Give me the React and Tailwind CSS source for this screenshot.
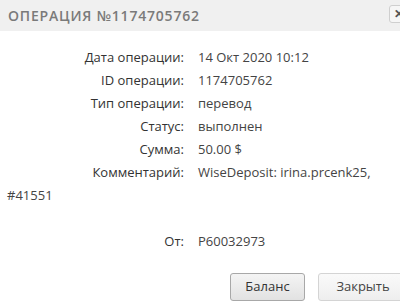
import React from "react";

const rows = [
  ["Дата операции:", "14 Окт 2020 10:12"],
  ["ID операции:", "1174705762"],
  ["Тип операции:", "перевод"],
  ["Статус:", "выполнен"],
  ["Сумма:", "50.00 $"],
];

export default function App() {
  return (
    <div className="w-[400px] h-[308px] bg-white overflow-hidden relative" style={{ fontFamily: '"Open Sans", "Noto Sans", sans-serif' }}>
      <div className="h-[31px] bg-[#f0f0f0] flex items-center pl-[8px]">
        <span className="text-[14px] font-semibold tracking-[0.8px] text-[#7a7a7a] leading-none">ОПЕРАЦИЯ №1174705762</span>
      </div>
      <div className="absolute left-[389px] top-[5px] w-[22px] h-[18px] rounded-[3px] border border-[#cfcfcf] bg-[#f6f6f6] flex items-center pl-[4px] text-[#555] text-[12px] font-bold leading-none">✕</div>
      <div className="pt-[15px] pl-[7px] text-[13px] text-[#333] leading-[23px]">
        {rows.map(([l, v]) => (
          <div key={l} className="flex">
            <span className="w-[177px] text-right">{l}</span>
            <span className="ml-[14px] text-[#444]">{v}</span>
          </div>
        ))}
        <div className="pr-[10px]">
          <span className="inline-block w-[177px] text-right">Комментарий:</span>
          <span className="ml-[14px] text-[#444]">WiseDeposit: irina.prcenk25, #41551</span>
        </div>
        <div className="flex mt-[23px]">
          <span className="w-[177px] text-right">От:</span>
          <span className="ml-[14px] text-[#444]">P60032973</span>
        </div>
      </div>
      <div className="absolute top-[273px] left-[230px] flex gap-[13px]">
        <button className="w-[75px] h-[28px] rounded-[3px] border border-[#a8a8a8] bg-gradient-to-b from-[#f4f4f4] to-[#e2e2e2] text-[13px] text-[#333]">Баланс</button>
        <button className="w-[90px] h-[28px] rounded-[3px] border border-[#d4d4d4] bg-gradient-to-b from-[#fafafa] to-[#eeeeee] text-[13px] text-[#444]">Закрыть</button>
      </div>
    </div>
  );
}
